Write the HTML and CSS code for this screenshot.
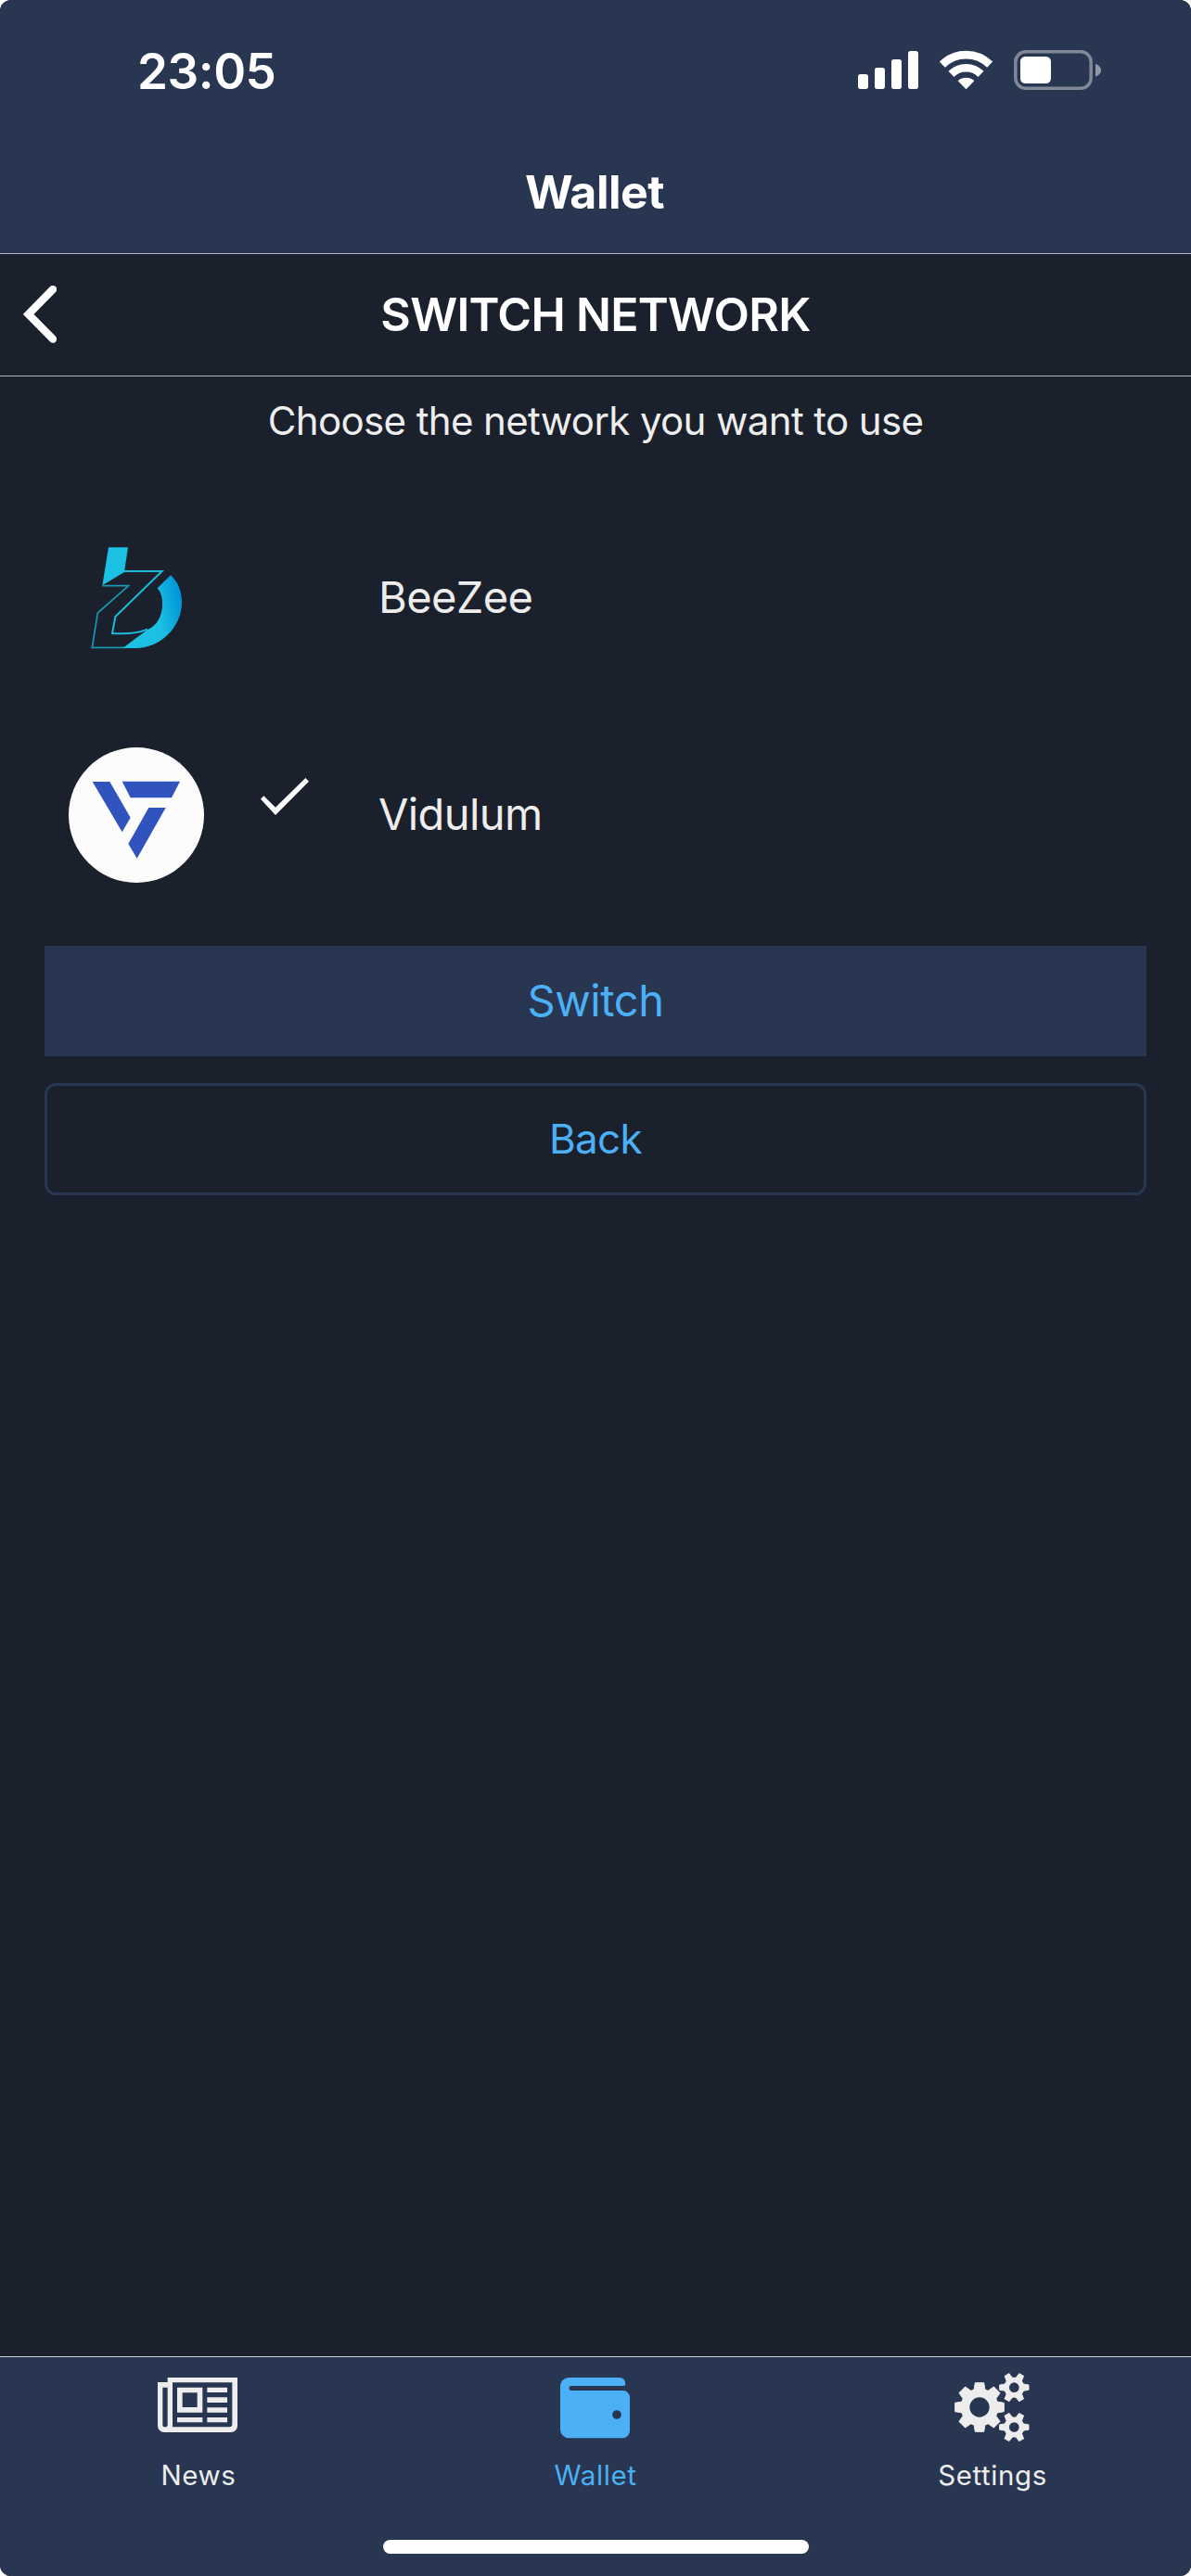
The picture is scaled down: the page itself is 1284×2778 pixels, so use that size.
FILE: index.html
```html
<!DOCTYPE html>
<html lang="en">
<head>
<meta charset="utf-8">
<title>Wallet</title>
<link rel="stylesheet" href="styles.css">
</head>
<body>
<div class="screen">
  <header class="top">
    <div class="status">
      <span class="clock">23:05</span>
      <div class="status-icons">
        <svg width="65" height="44" viewBox="135 159 195 132" fill="#fff">
          <rect x="135" y="240" width="33" height="48" rx="8"/>
          <rect x="189" y="219" width="33" height="69" rx="8"/>
          <rect x="243" y="192" width="33" height="96" rx="8"/>
          <rect x="297" y="165" width="33" height="123" rx="8"/>
        </svg>
        <svg class="wifi" width="57" height="44" viewBox="399 159 171 132" fill="none" stroke="#fff" stroke-width="26">
          <path d="M407.5 209A111 113 0 0 1 561.5 209"/>
          <path d="M436.5 239.500A69 70 0 0 1 532.500 239.500"/>
          <path d="M459 260.500A39 39 0 0 1 510 260.500Q511 262 509.500 263.500L486 287Q484.500 288.500 483 287L459.500 263.500Q458 262 459 260.500Z" fill="#fff" stroke="none"/>
        </svg>
        <svg width="94" height="44" viewBox="639 159 282 132">
          <rect x="644.500" y="167.500" width="244" height="118" rx="33" fill="none" stroke="#808898" stroke-width="10.500"/>
          <rect x="660" y="183" width="99" height="87" rx="16" fill="#fff"/>
          <path d="M903 206Q921 213 921 227T903 248Z" fill="#9097a5"/>
        </svg>
      </div>
    </div>
    <h1 class="title">Wallet</h1>
  </header>

  <div class="subheader">
    <svg class="chevron" width="36" height="62" viewBox="75 924 108 186" fill="none" stroke="#fff" stroke-width="25" stroke-linecap="round">
      <path d="M171 936L92 1016.500L171 1097"/>
    </svg>
    <h2 class="subtitle">SWITCH NETWORK</h2>
  </div>

  <main class="content">
    <p class="hint">Choose the network you want to use</p>
    <ul class="networks">
      <li class="network">
        <svg width="146" height="146" viewBox="42 33 438 438">
          <defs>
            <linearGradient id="bz" gradientUnits="userSpaceOnUse" x1="330" y1="300" x2="408" y2="285">
              <stop offset="0" stop-color="#1cc0e2"/><stop offset="1" stop-color="#0095d8"/>
            </linearGradient>
          </defs>
          <path d="M171 91H234L222 171L151 214Z" fill="#1cc0e2"/>
          <path d="M222 168H344L193 315L183 369Q255 374 297 356" fill="none" stroke="#1cbadb" stroke-width="6"/>
          <path d="M151 215H236L136 303L118 415H225" fill="none" stroke="#1698b3" stroke-width="5"/>
          <path d="M372 181C397 204 408 234 408 270C407 353 335 417 260 417H217L296 358C328 344 345 313 345 276Q346 242 329 223Z" fill="url(#bz)"/>
        </svg>
        <span class="mark"></span>
        <span class="name">BeeZee</span>
      </li>
      <li class="network">
        <svg width="146" height="146" viewBox="42 78 438 438">
          <circle cx="261" cy="297" r="219" fill="#fcfcfd"/>
          <g fill="#3053bd">
            <path d="M119 189H175L242 305L215 352Z"/>
            <path d="M215 188H402L375 241H242Z"/>
            <path d="M301 273H356L263 437L235 390Z"/>
          </g>
        </svg>
        <span class="mark">
          <svg class="check" width="52" height="40" viewBox="663 177 156 120" fill="#fff">
            <path d="M663 245L673 235L711 272L808 177L819 188L711 297Z"/>
          </svg>
        </span>
        <span class="name">Vidulum</span>
      </li>
    </ul>
    <div class="actions">
      <button class="btn btn-primary">Switch</button>
      <button class="btn btn-outline">Back</button>
    </div>
  </main>

  <footer class="bottom">
    <nav class="tabs">
      <a class="tab">
        <svg width="90" height="80" viewBox="87 108 270 240">
          <path d="M122 132H348V288A21 21 0 0 1 327 309H111A21 21 0 0 1 90 288V147H122Z" fill="#ededed"/>
          <path d="M138 148H331V283Q331 292 322 292H138ZM106 164H122V284A8 8 0 0 1 106 284Z" fill="#293651"/>
          <path d="M153 164H235V245H153ZM170 181V228H218V181ZM153 261H235V277H153ZM250 164H315V180H250ZM250 196H315V213H250ZM250 229H315V245H250ZM250 261H315V277H250Z" fill="#ededed" fill-rule="evenodd"/>
        </svg>
        <span>News</span>
      </a>
      <a class="tab tab-active">
        <svg width="90" height="80" viewBox="81 108 270 240" fill="#4bb0f6">
          <path d="M130 132H292Q313 133 313 153Q313 159 306 159H138A7.500 7.500 0 0 0 138 174H305A22 22 0 0 1 327 196V304A24 24 0 0 1 303 328H130A28 28 0 0 1 102 300V160A28 28 0 0 1 130 132Z"/>
          <circle cx="285" cy="252" r="14.500" fill="#293651"/>
        </svg>
        <span>Wallet</span>
      </a>
      <a class="tab">
        <svg width="90" height="80" viewBox="105 108 270 240" fill="#ededed" stroke="#ededed" stroke-linejoin="round">
          <defs>
            <path id="tooth" d="M-18 -56L-14 -79H14L18 -56Z" stroke-width="3"/>
            <path id="cog" d="M-11 -28L-8 -47H8L11 -28Z" stroke-width="3"/>
            <g id="small">
              <circle r="24.500" fill="none" stroke-width="17"/>
              <use href="#cog" transform="rotate(30)"/><use href="#cog" transform="rotate(90)"/><use href="#cog" transform="rotate(150)"/>
              <use href="#cog" transform="rotate(210)"/><use href="#cog" transform="rotate(270)"/><use href="#cog" transform="rotate(330)"/>
            </g>
          </defs>
          <g transform="translate(198 228)">
            <circle r="46.500" fill="none" stroke-width="29"/>
            <use href="#tooth"/><use href="#tooth" transform="rotate(45)"/><use href="#tooth" transform="rotate(90)"/><use href="#tooth" transform="rotate(135)"/>
            <use href="#tooth" transform="rotate(180)"/><use href="#tooth" transform="rotate(225)"/><use href="#tooth" transform="rotate(270)"/><use href="#tooth" transform="rotate(315)"/>
          </g>
          <use href="#small" transform="translate(310 164)"/>
          <use href="#small" transform="translate(310 292.500)"/>
        </svg>
        <span>Settings</span>
      </a>
    </nav>
    <div class="home-bar"></div>
  </footer>
</div>
</body>
</html>
```
FILE: styles.css
```css
* { box-sizing: border-box; }

body {
  margin: 0;
  background: #fff;
  font-family: Inter, "Liberation Sans", sans-serif;
  color: #ededed;
}

h1, h2, p, ul { margin: 0; padding: 0; }
svg { display: block; flex: none; }

.screen {
  display: flex;
  flex-direction: column;
  width: 1284px;
  height: 2778px;
  background: #1b212c;
  border-radius: 12px;
  overflow: hidden;
}

/* status bar and title */
.top {
  height: 274px;
  background: #293651;
  border-bottom: 1px solid #b4b8bf;
}

.status {
  display: flex;
  justify-content: space-between;
  align-items: flex-start;
  height: 167px;
  padding: 47px 97px 0 148px;
}

.clock {
  font-size: 53px;
  font-weight: 600;
  line-height: 60px;
  letter-spacing: -0.5px;
  color: #fff;
}

.status-icons {
  display: flex;
  gap: 23px;
  padding-top: 6px;
}

.wifi { overflow: visible; }

.title {
  padding-right: 2px;
  font-size: 50px;
  font-weight: 700;
  line-height: 80px;
  letter-spacing: -0.5px;
  text-align: center;
  color: #fff;
}

.subheader {
  display: grid;
  grid-template-columns: 61px 1fr 61px;
  align-items: center;
  height: 132px;
  padding-bottom: 2px;
  border-bottom: 1px solid #b4b8bf;
}

.chevron { justify-self: end; }

.subtitle {
  font-size: 50px;
  font-weight: 600;
  line-height: 60px;
  letter-spacing: -0.7px;
  text-align: center;
  color: #fff;
}

/* network picker */
.content { flex: 1; }

.hint {
  padding-top: 24px;
  font-size: 42px;
  line-height: 48px;
  letter-spacing: -0.62px;
  text-align: center;
}

.networks {
  padding: 49px 74px 0;
  list-style: none;
}

.network {
  display: grid;
  grid-template-columns: 146px 188px 1fr;
  align-items: center;
  height: 234px;
}

.network + .network { height: 236px; }
.network + .network .name { padding-bottom: 2px; }

.mark {
  align-self: start;
  padding: 78px 0 0 61px;
}

.name {
  font-size: 47px;
  line-height: 60px;
  letter-spacing: -0.6px;
}

.actions {
  display: flex;
  flex-direction: column;
  gap: 29px;
  padding: 23px 48px 0;
}

.btn {
  padding: 0 0 2px;
  border: 0;
  background: none;
  font-family: inherit;
  color: #4bb0f6;
}

.btn-primary {
  height: 119px;
  background: #293651;
  font-size: 47px;
  letter-spacing: -0.4px;
}

.btn-outline {
  height: 121px;
  border: 3px solid #293651;
  border-radius: 12px;
  font-size: 44px;
  letter-spacing: -0.7px;
}

/* bottom tabs */
.bottom {
  display: flex;
  flex-direction: column;
  align-items: center;
  height: 237px;
  background: #293651;
  border-top: 1px solid #d0d2d6;
}

.tabs {
  display: grid;
  grid-template-columns: repeat(3, 1fr);
  width: 100%;
  height: 197px;
  padding-top: 14px;
}

.tab {
  display: flex;
  flex-direction: column;
  align-items: center;
  gap: 13px;
  font-size: 29.5px;
  line-height: 40px;
  letter-spacing: 0.6px;
}

.tab-active { color: #4bb0f6; }

.home-bar {
  width: 459px;
  height: 15px;
  border-radius: 8px;
  background: #fdfdfe;
}
```
